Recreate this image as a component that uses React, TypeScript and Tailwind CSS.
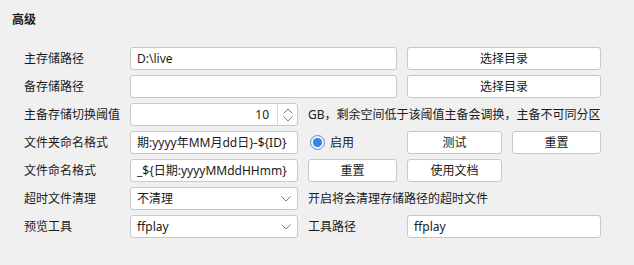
import React from "react";

const font = { fontFamily: '"Noto Sans", "Noto Sans CJK SC", sans-serif' };

function Label({ children }: { children: React.ReactNode }) {
  return <div className="flex items-center h-[23px] whitespace-nowrap">{children}</div>;
}

function Input({ children, className = "" }: { children?: React.ReactNode; className?: string }) {
  return (
    <div
      className={`flex items-center h-[23px] bg-white border border-[#c8c8c8] rounded-[3px] pl-[6px] overflow-hidden whitespace-nowrap ${className}`}
    >
      {children}
    </div>
  );
}

function Button({ children, className = "" }: { children: React.ReactNode; className?: string }) {
  return (
    <div
      className={`flex items-center justify-center h-[23px] bg-white border border-[#c8c8c8] rounded-[3px] whitespace-nowrap ${className}`}
    >
      {children}
    </div>
  );
}

function Chevron() {
  return (
    <svg width="10" height="6" viewBox="0 0 10 6" className="mr-[6px]">
      <path d="M0.5 0.5 L5 5 L9.5 0.5" fill="none" stroke="#7a7a7a" strokeWidth="1" />
    </svg>
  );
}

function Select({ value }: { value: string }) {
  return (
    <div className="flex items-center justify-between h-[23px] bg-white border border-[#c8c8c8] rounded-[3px] pl-[6px]">
      <span>{value}</span>
      <Chevron />
    </div>
  );
}

const folderFmt = "期:yyyy年MM月dd日}-${ID}";
const fileFmt = "_${日期:yyyyMMddHHmm}";

export default function App() {
  return (
    <div
      className="w-[634px] h-[265px] bg-[#f0f0f0] text-[12px] text-[#1a1a1a] pt-[11px] pl-[12px]"
      style={font}
    >
      <div className="font-bold leading-[18px] text-[12px]">高级</div>
      <div className="mt-[18px] pl-[12px] grid grid-cols-[96px_168px_89px_95px_89px] gap-x-[10px] gap-y-[5px]">
        {/* row 1 */}
        <Label>主存储路径</Label>
        <Input className="col-span-2">D:\live</Input>
        <Button className="col-span-2">选择目录</Button>

        {/* row 2 */}
        <Label>备存储路径</Label>
        <Input className="col-span-2" />
        <Button className="col-span-2">选择目录</Button>

        {/* row 3 */}
        <Label>主备存储切换阈值</Label>
        <div className="flex h-[23px] bg-white border border-[#c8c8c8] rounded-[3px] overflow-hidden">
          <div className="flex-1 flex items-center justify-end pr-[8px]">10</div>
          <div className="w-[20px] border-l border-[#d8d8d8] flex flex-col items-center justify-center gap-[2px]">
            <svg width="10" height="6" viewBox="0 0 10 6">
              <path d="M0.5 5.5 L5 1 L9.5 5.5" fill="none" stroke="#7a7a7a" strokeWidth="1" />
            </svg>
            <svg width="10" height="6" viewBox="0 0 10 6">
              <path d="M0.5 0.5 L5 5 L9.5 0.5" fill="none" stroke="#7a7a7a" strokeWidth="1" />
            </svg>
          </div>
        </div>
        <div className="col-span-3 flex items-center h-[23px] whitespace-nowrap">
          GB，剩余空间低于该阈值主备会调换，主备不可同分区
        </div>

        {/* row 4 */}
        <Label>文件夹命名格式</Label>
        <Input>{folderFmt}</Input>
        <div className="flex items-center h-[23px] gap-[5px] pl-[2px]">
          <div className="w-[15px] h-[15px] rounded-full border-[1.5px] border-[#4a94e6] flex items-center justify-center">
            <div className="w-[9px] h-[9px] rounded-full bg-[#2f86e6]" />
          </div>
          <span>启用</span>
        </div>
        <Button>测试</Button>
        <Button>重置</Button>

        {/* row 5 */}
        <Label>文件命名格式</Label>
        <Input>{fileFmt}</Input>
        <Button>重置</Button>
        <Button>使用文档</Button>
        <div />

        {/* row 6 */}
        <Label>超时文件清理</Label>
        <Select value="不清理" />
        <div className="col-span-3 flex items-center h-[23px] whitespace-nowrap">
          开启将会清理存储路径的超时文件
        </div>

        {/* row 7 */}
        <Label>预览工具</Label>
        <Select value="ffplay" />
        <Label>工具路径</Label>
        <Input className="col-span-2">ffplay</Input>
      </div>
    </div>
  );
}
